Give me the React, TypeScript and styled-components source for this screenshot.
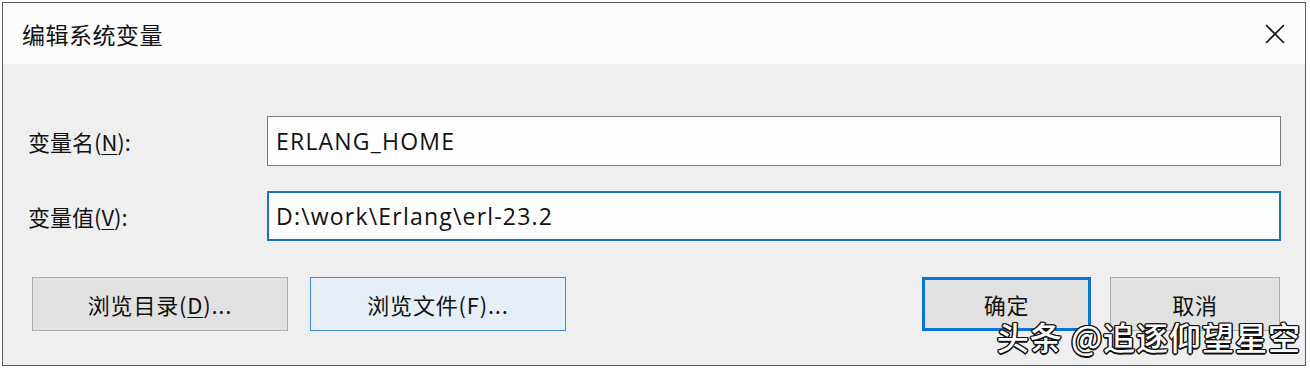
import React from "react";
import styled, { createGlobalStyle } from "styled-components";

const GlobalStyle = createGlobalStyle`
  html, body {
    margin: 0;
    padding: 0;
    background: #ffffff;
  }
  body {
    font-family: "Noto Sans", "Noto Sans CJK SC", sans-serif;
  }
`;

const Page = styled.div`
  width: 1310px;
  height: 370px;
  padding: 2px 4px 4px 2px;
  box-sizing: border-box;
  background: #ffffff;
`;

const Window = styled.div`
  position: relative;
  width: 100%;
  height: 100%;
  box-sizing: border-box;
  border: 1px solid #5c5c5c;
  display: flex;
  flex-direction: column;
  overflow: hidden;
`;

const TitleBar = styled.div`
  height: 61px;
  background: #fcfcfd;
  display: flex;
  align-items: center;
  justify-content: space-between;
  padding: 0 18px 0 19px;
  flex-shrink: 0;
`;

const Title = styled.div`
  font-family: "Noto Sans CJK SC", sans-serif;
  font-size: 23px;
  color: #111;
  letter-spacing: 0.5px;
`;

const CloseButton = styled.button`
  width: 24px;
  height: 24px;
  border: none;
  background: transparent;
  padding: 0;
  display: flex;
  align-items: center;
  justify-content: center;
`;

const Body = styled.div`
  flex: 1;
  background: #f0eff0;
  padding: 52px 24px 0 25px;
  display: flex;
  flex-direction: column;
`;

const FieldRow = styled.div`
  display: flex;
  align-items: center;
  margin-bottom: 25px;
`;

const Label = styled.label`
  width: 239px;
  flex-shrink: 0;
  font-family: "Noto Sans CJK SC", sans-serif;
  font-size: 22px;
  color: #111;
  u {
    text-decoration-thickness: 1px;
    text-underline-offset: 3px;
  }
`;

const Input = styled.div<{ $focused?: boolean }>`
  flex: 1;
  height: 50px;
  box-sizing: border-box;
  background: #fefefe;
  border: ${(p) => (p.$focused ? "2px solid #1a72c9" : "1px solid #7a7a7a")};
  padding-left: ${(p) => (p.$focused ? "7px" : "8px")};
  display: flex;
  align-items: center;
  font-family: "Open Sans", "Noto Sans", sans-serif;
  font-size: 23px;
  letter-spacing: 1.2px;
  color: #111;
`;

const ButtonRow = styled.div`
  display: flex;
  justify-content: space-between;
  align-items: center;
  margin-top: 11px;
  padding: 0 1px 0 4px;
`;

const ButtonGroup = styled.div<{ $gap: number }>`
  display: flex;
  gap: ${(p) => p.$gap}px;
`;

const Button = styled.button<{ $w: number; $variant?: "default" | "hover" | "primary" }>`
  width: ${(p) => p.$w}px;
  height: 54px;
  box-sizing: border-box;
  font-family: "Noto Sans CJK SC", sans-serif;
  font-size: 22px;
  letter-spacing: 0.8px;
  color: #111;
  background: ${(p) => (p.$variant === "hover" ? "#e6eef8" : "#e1e1e1")};
  border: ${(p) =>
    p.$variant === "primary"
      ? "3px solid #0a74d4"
      : p.$variant === "hover"
      ? "1.5px solid #3d8ad6"
      : "1px solid #adadad"};
  padding: 0;
  u {
    text-decoration-thickness: 1px;
    text-underline-offset: 3px;
  }
`;

const Watermark = styled.div`
  position: absolute;
  right: 4px;
  bottom: 6px;
  font-family: "Noto Sans CJK SC", sans-serif;
  font-size: 32px;
  font-weight: 500;
  color: #ffffff;
  letter-spacing: 1px;
  white-space: nowrap;
  text-shadow:
    -1.5px 0 0 #111, 1.5px 0 0 #111, 0 -1.5px 0 #111, 0 1.5px 0 #111,
    -1px -1px 0 #111, 1px 1px 0 #111, -1px 1px 0 #111, 1px -1px 0 #111;
`;

const CloseIcon = () => (
  <svg width="22" height="22" viewBox="0 0 22 22">
    <path d="M2 2 L20 20 M20 2 L2 20" stroke="#111" strokeWidth="1.6" fill="none" />
  </svg>
);

export default function App() {
  return (
    <>
      <GlobalStyle />
      <Page>
        <Window>
          <TitleBar>
            <Title>编辑系统变量</Title>
            <CloseButton>
              <CloseIcon />
            </CloseButton>
          </TitleBar>
          <Body>
            <FieldRow>
              <Label>
                变量名(<u>N</u>):
              </Label>
              <Input>ERLANG_HOME</Input>
            </FieldRow>
            <FieldRow>
              <Label>
                变量值(<u>V</u>):
              </Label>
              <Input $focused>D:\work\Erlang\erl-23.2</Input>
            </FieldRow>
            <ButtonRow>
              <ButtonGroup $gap={22}>
                <Button $w={256}>
                  浏览目录(<u>D</u>)...
                </Button>
                <Button $w={256} $variant="hover">
                  浏览文件(F)...
                </Button>
              </ButtonGroup>
              <ButtonGroup $gap={19}>
                <Button $w={169} $variant="primary">
                  确定
                </Button>
                <Button $w={170}>取消</Button>
              </ButtonGroup>
            </ButtonRow>
          </Body>
          <Watermark>头条 @追逐仰望星空</Watermark>
        </Window>
      </Page>
    </>
  );
}
